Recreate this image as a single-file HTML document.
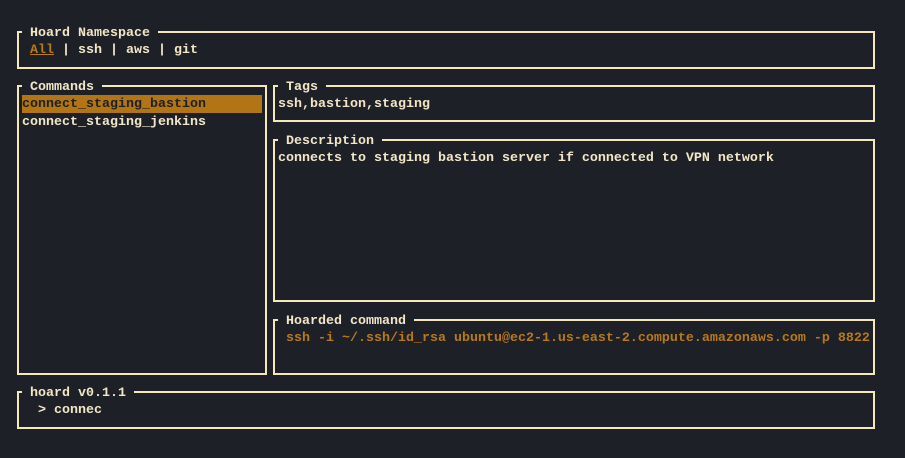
<!DOCTYPE html>
<html><head><style>
body{margin:0;width:905px;height:458px;background:#1e2028;overflow:hidden;font-family:"Liberation Mono",monospace;font-size:13.33px;color:#f2e6c6;font-weight:bold}
.b{position:absolute;border:2px solid #f5e6bc;box-sizing:border-box}
.t{position:absolute;top:-7px;left:3px;background:#1e2028;padding:0 8px;line-height:16px;white-space:pre}
.c{position:absolute;left:3px;top:8px;line-height:18px;white-space:pre;right:10px}
.c span.l{display:block;padding-top:1px;height:17px}
.o{color:#b8791a}
.hl{background:#b27516;color:#1e2028;display:block;padding-top:1px;height:17px}
</style></head><body>
<div class="b" style="left:17px;top:31px;width:858px;height:38px"><div class="t">Hoard Namespace</div><div class="c"><span class="l"> <span class="o" style="text-decoration:underline">All</span> | ssh | aws | git</span></div></div>
<div class="b" style="left:17px;top:85px;width:250px;height:290px"><div class="t">Commands</div><div class="c" style="right:3px"><span class="hl">connect_staging_bastion</span><span class="l">connect_staging_jenkins</span></div></div>
<div class="b" style="left:273px;top:85px;width:602px;height:37px"><div class="t">Tags</div><div class="c"><span class="l">ssh,bastion,staging</span></div></div>
<div class="b" style="left:273px;top:139px;width:602px;height:163px"><div class="t">Description</div><div class="c"><span class="l">connects to staging bastion server if connected to VPN network</span></div></div>
<div class="b" style="left:273px;top:319px;width:602px;height:56px"><div class="t">Hoarded command</div><div class="c o"><span class="l"> ssh -i ~/.ssh/id_rsa ubuntu@ec2-1.us-east-2.compute.amazonaws.com -p 8822</span></div></div>
<div class="b" style="left:17px;top:391px;width:858px;height:38px"><div class="t">hoard v0.1.1</div><div class="c"><span class="l">  &gt; connec</span></div></div>
</body></html>
